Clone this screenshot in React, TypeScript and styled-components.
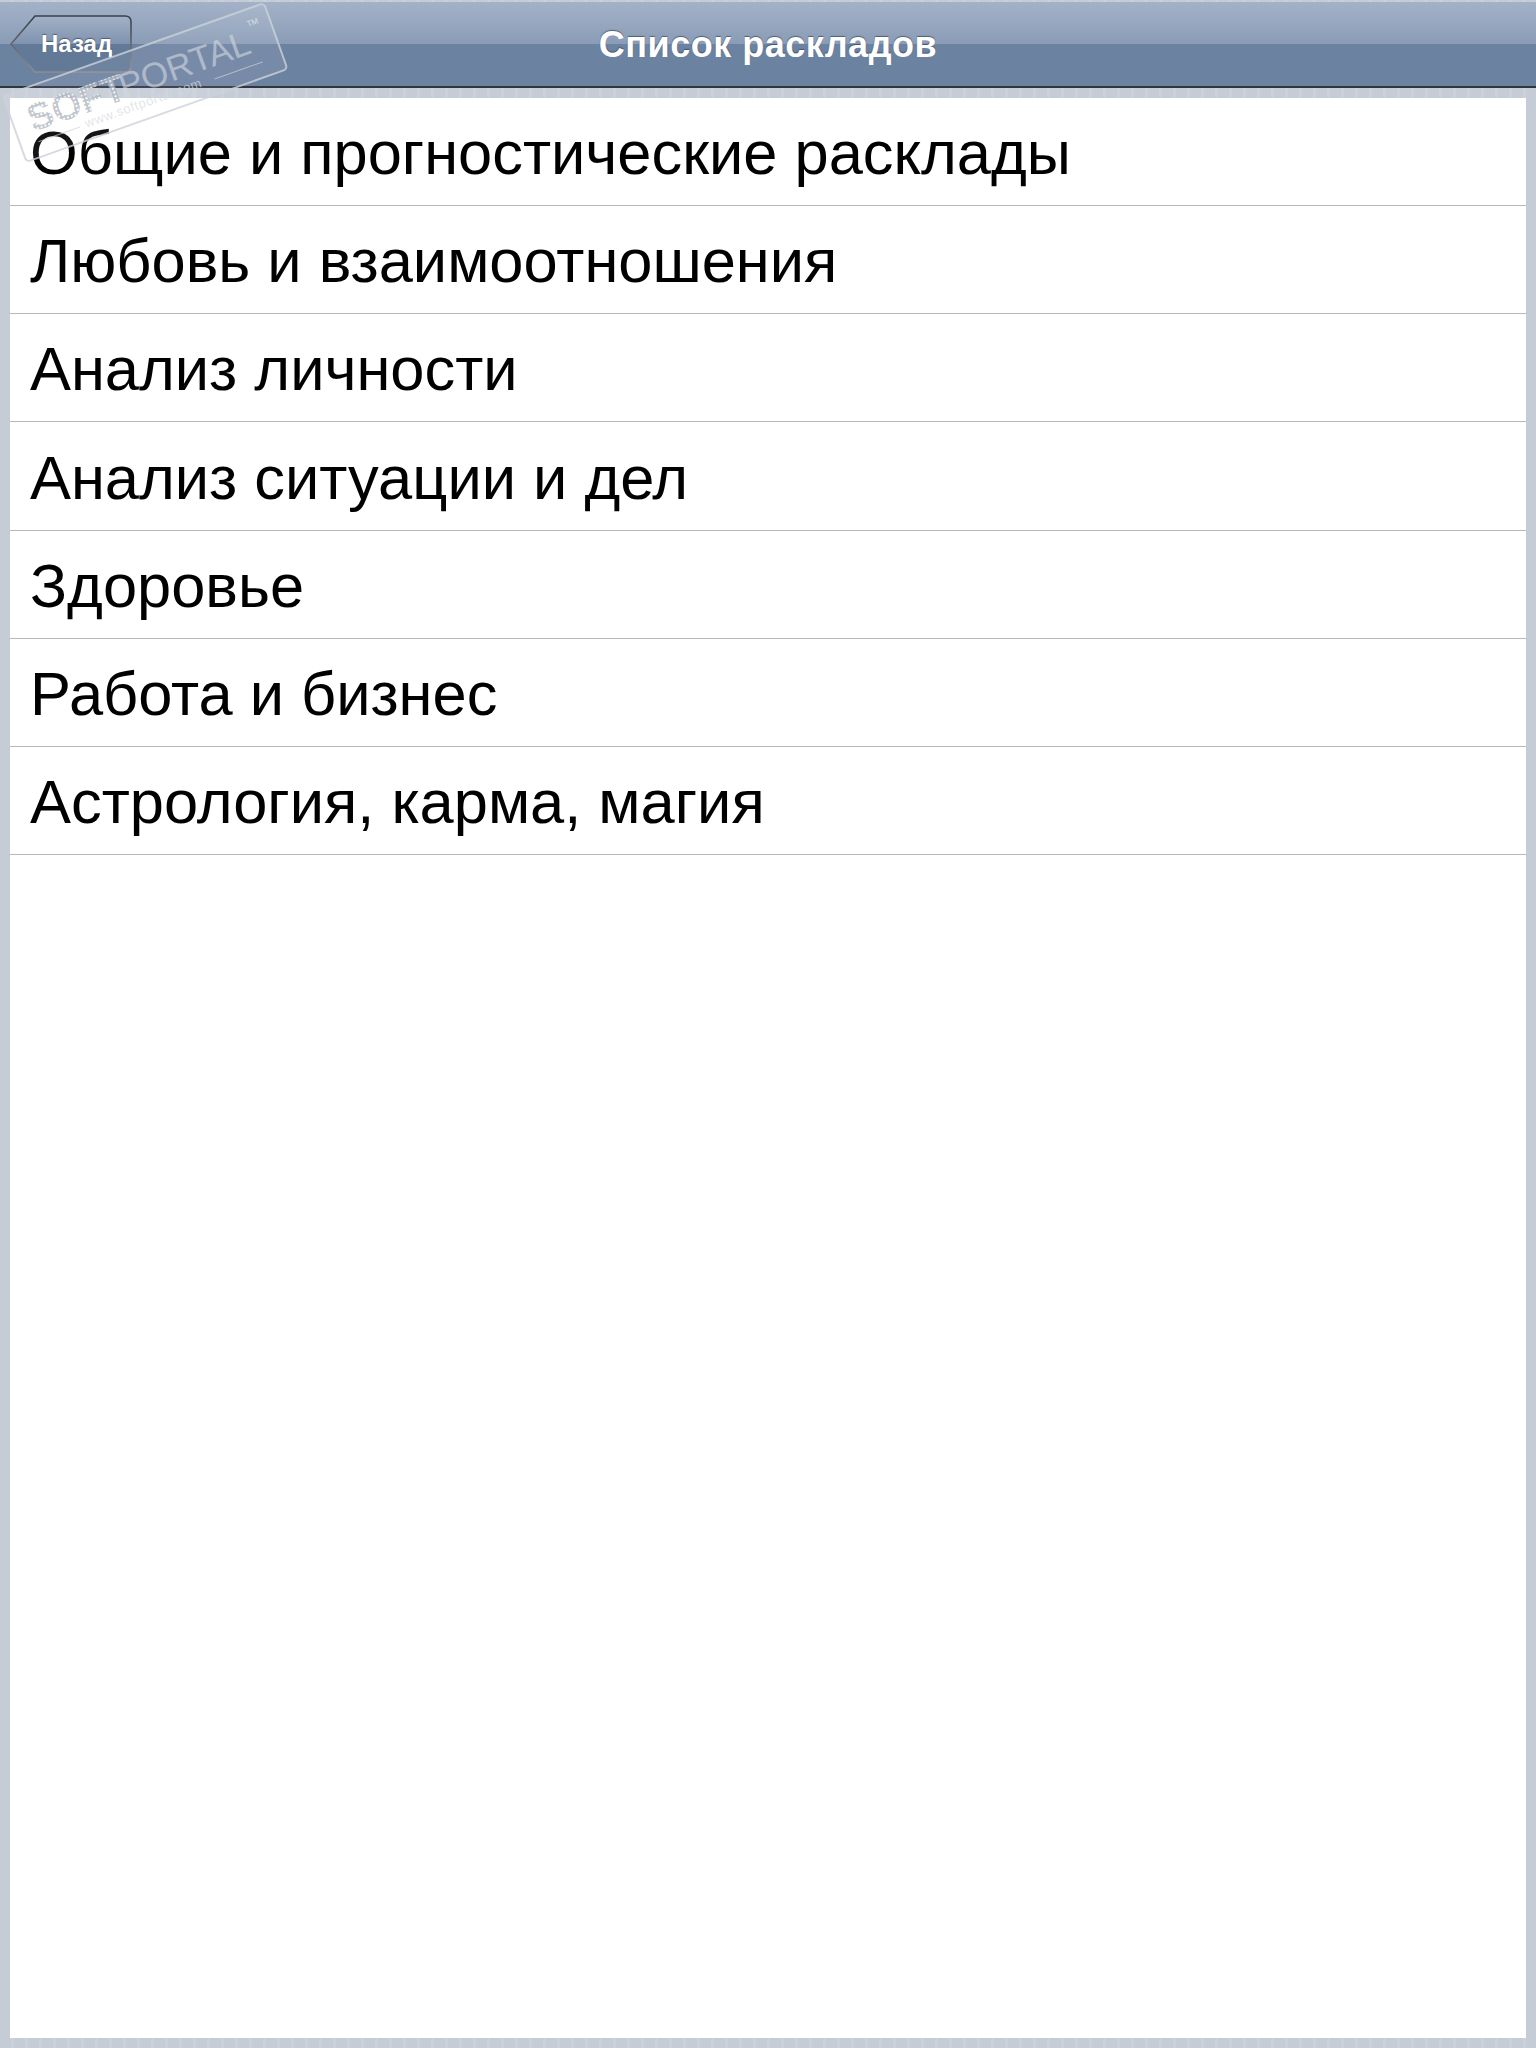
import styled, { createGlobalStyle } from 'styled-components';

const GlobalStyle = createGlobalStyle`
  html, body {
    margin: 0;
    padding: 0;
  }
  body {
    font-family: "Liberation Sans", Arial, sans-serif;
  }
`;

const Page = styled.div`
  position: relative;
  width: 1536px;
  height: 2048px;
  overflow: hidden;
  display: flex;
  flex-direction: column;
  background: repeating-linear-gradient(
    90deg,
    #c5ccd6 0,
    #c5ccd6 11px,
    #cbd1da 11px,
    #cbd1da 14px
  );
`;

const NavBar = styled.header`
  height: 84px;
  margin-top: 2px;
  border-bottom: 2px solid #2f3640;
  display: grid;
  grid-template-columns: 1fr auto 1fr;
  align-items: center;
  background: linear-gradient(
    180deg,
    #a3b2c8 0,
    #8a9cb6 42px,
    #6c82a1 42px,
    #6c82a1 100%
  );
`;

const BackButton = styled.button`
  position: relative;
  justify-self: start;
  width: 122px;
  height: 58px;
  margin-left: 10px;
  padding: 0 0 0 31px;
  border: 0;
  background: none;
  color: #fff;
  font-family: inherit;
  font-size: 24px;
  font-weight: bold;
  text-align: left;
  text-shadow: 0 -1px 1px rgba(40, 50, 70, 0.6);

  svg {
    position: absolute;
    left: 0;
    top: 0;
  }

  span {
    position: relative;
  }
`;

const Title = styled.h1`
  margin: 2px 0 0;
  color: #fff;
  font-size: 36px;
  font-weight: bold;
  letter-spacing: 0.5px;
  text-shadow: 0 -1px 1px rgba(40, 50, 70, 0.6);
`;

const Panel = styled.main`
  flex: 1;
  margin: 10px;
  background: #fff;
`;

const List = styled.ul`
  margin: 0;
  padding: 0;
  list-style: none;
`;

const Row = styled.li`
  box-sizing: border-box;
  height: 108.17px;
  padding: 2px 0 0 20px;
  display: flex;
  align-items: center;
  border-bottom: 1px solid #b8b8b8;
  color: #000;
  font-size: 61.4px;
`;

const Watermark = styled.svg`
  position: absolute;
  left: 0;
  top: 0;
  pointer-events: none;
`;

const rows = [
  'Общие и прогностические расклады',
  'Любовь и взаимоотношения',
  'Анализ личности',
  'Анализ ситуации и дел',
  'Здоровье',
  'Работа и бизнес',
  'Астрология, карма, магия',
];

const BackShape = () => (
  <svg width="122" height="58" viewBox="0 0 122 58">
    <defs>
      <linearGradient id="backFill" x1="0" y1="0" x2="0" y2="1">
        <stop offset="0" stopColor="#a3b1c6" />
        <stop offset="0.5" stopColor="#7f93af" />
        <stop offset="0.5" stopColor="#627998" />
        <stop offset="1" stopColor="#627998" />
      </linearGradient>
      <linearGradient id="backEdge" x1="0" y1="0" x2="0" y2="1">
        <stop offset="0" stopColor="#3a3f4a" />
        <stop offset="1" stopColor="#8b8e92" />
      </linearGradient>
    </defs>
    <path
      d="M1 29 L25 1 H115 Q121 1 121 7 V51 Q121 57 115 57 H25 Z"
      fill="url(#backFill)"
      stroke="url(#backEdge)"
      strokeWidth="1.6"
    />
  </svg>
);

const SoftportalMark = () => (
  <Watermark width="300" height="170" viewBox="0 0 300 170">
    <defs>
      <pattern id="softDots" width="4" height="4" patternUnits="userSpaceOnUse">
        <rect x="0.5" y="0.5" width="3" height="3" fill="#fff" fillOpacity="0.8" stroke="#a9afba" strokeOpacity="0.7" strokeWidth="1" />
      </pattern>
    </defs>
    <g transform="translate(3 96) rotate(-19.6)">
      <rect
        x="0"
        y="0"
        width="277"
        height="70"
        rx="4"
        fill="#fff"
        fillOpacity="0.08"
        stroke="#cdd2da"
        strokeOpacity="0.8"
        strokeWidth="2"
      />
      <text x="16" y="44" fontFamily="Liberation Sans" fontWeight="bold" fontSize="38" fill="url(#softDots)">
        SOFT
      </text>
      <text x="113" y="43" fontFamily="Liberation Sans" fontSize="35" fill="#d5d9e0" fillOpacity="0.6">
        PORTAL
      </text>
      <text x="254" y="17" fontFamily="Liberation Sans" fontSize="8" fill="#fff" fillOpacity="0.6">
        TM
      </text>
      <line x1="18" y1="55" x2="62" y2="55" stroke="#cdd2da" strokeOpacity="0.7" />
      <text x="68" y="58" fontFamily="Liberation Sans" fontSize="13" letterSpacing="0.6" fill="#d5d9e0" fillOpacity="0.7">
        www.softportal.com
      </text>
      <line x1="205" y1="55" x2="256" y2="55" stroke="#cdd2da" strokeOpacity="0.7" />
    </g>
  </Watermark>
);

export default function App() {
  return (
    <Page>
      <GlobalStyle />
      <NavBar>
        <BackButton>
          <BackShape />
          <span>Назад</span>
        </BackButton>
        <Title>Список раскладов</Title>
      </NavBar>
      <Panel>
        <List>
          {rows.map(row => (
            <Row key={row}>{row}</Row>
          ))}
        </List>
      </Panel>
      <SoftportalMark />
    </Page>
  );
}
